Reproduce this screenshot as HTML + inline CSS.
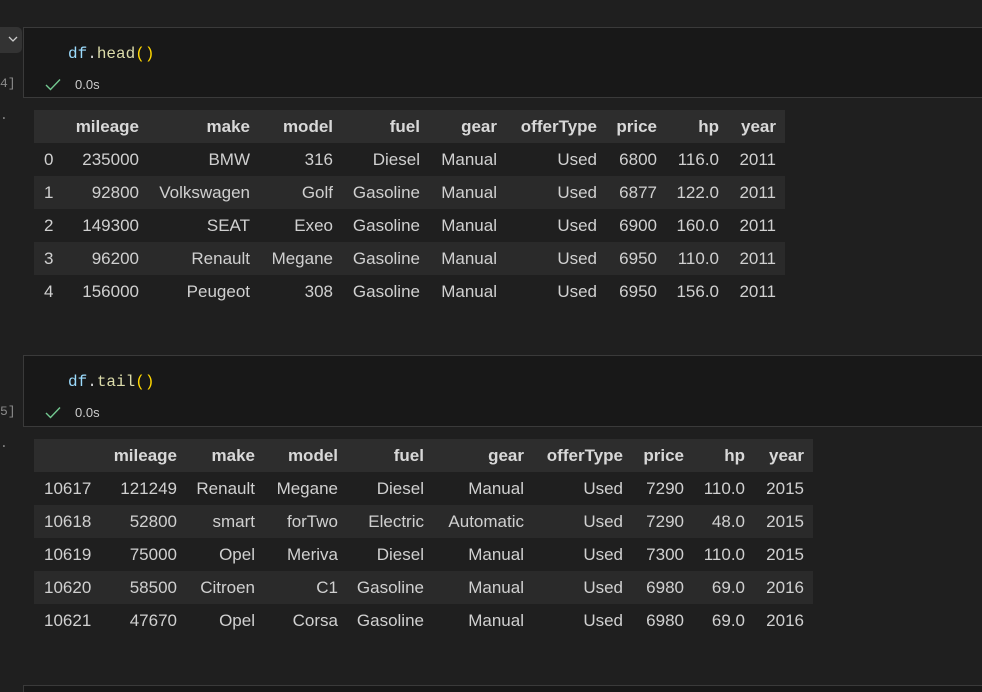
<!DOCTYPE html>
<html><head><meta charset="utf-8"><style>
html,body{margin:0;width:982px;height:692px;overflow:hidden;}
body{background:#1f1f1f;position:relative;font-family:"Liberation Sans",sans-serif;}
.cell{position:absolute;left:23px;width:965px;background:#181818;border:1px solid #3a3a3a;box-sizing:border-box;}
.code{position:absolute;left:44px;font-family:"Liberation Mono",monospace;font-size:16px;color:#9cdcfe;}
.code .f{color:#dcdcaa}.code .p{color:#ffd700}.code .w{color:#d4d4d4}
.chk{position:absolute;left:21px;}
.tm{position:absolute;left:51px;color:#cccccc;font-size:13px;}
.g{position:absolute;color:#8a8a8a;font-size:13px;font-family:"Liberation Mono",monospace;}
table{position:absolute;left:34px;border-collapse:collapse;table-layout:fixed;font-size:17px;color:#d0d0d0;}
td,th{height:33px;padding:0 9px 0 0;text-align:right;white-space:nowrap;box-sizing:border-box;}
th{font-weight:bold;color:#d8d8d8;}
tr.h{background:#2d2d2d}tr.a{background:#2a2a2a}
td.i{text-align:left;padding-left:10px}
</style></head><body>
<div style="position:absolute;left:0;top:27px;width:22px;height:26px;background:#333;border-radius:0 5px 5px 0"></div>
<svg style="position:absolute;left:7px;top:34px" width="12" height="10"><path d="M2 3l4 4 4-4" stroke="#ccc" fill="none" stroke-width="1.3"/></svg>
<div class="g" style="left:0;top:76px">4]</div>
<div class="g" style="left:0;top:108px">.</div>
<div class="g" style="left:0;top:404px">5]</div>
<div class="g" style="left:0;top:436px">.</div>

<div class="cell" style="top:27px;height:71px">
<div class="code" style="top:17px">df<span class="w">.</span><span class="f">head</span><span class="p">()</span></div>
<svg class="chk" style="top:50px" width="16" height="14"><path d="M1 7l4.5 4.5L15 1.5" stroke="#73c991" fill="none" stroke-width="1.4"/></svg>
<div class="tm" style="top:49px">0.0s</div>
</div>
<div class="cell" style="top:355px;height:72px">
<div class="code" style="top:17px">df<span class="w">.</span><span class="f">tail</span><span class="p">()</span></div>
<svg class="chk" style="top:50px" width="16" height="14"><path d="M1 7l4.5 4.5L15 1.5" stroke="#73c991" fill="none" stroke-width="1.4"/></svg>
<div class="tm" style="top:49px">0.0s</div>
</div>
<div class="cell" style="top:685px;height:7px;border-bottom:none"></div>

<table style="top:110px;width:751px">
<colgroup><col style="width:30px"><col style="width:84px"><col style="width:111px"><col style="width:83px"><col style="width:87px"><col style="width:77px"><col style="width:100px"><col style="width:60px"><col style="width:62px"><col style="width:57px"></colgroup>
<tr class="h"><th></th><th>mileage</th><th>make</th><th>model</th><th>fuel</th><th>gear</th><th>offerType</th><th>price</th><th>hp</th><th>year</th></tr>
<tr><td class="i">0</td><td>235000</td><td>BMW</td><td>316</td><td>Diesel</td><td>Manual</td><td>Used</td><td>6800</td><td>116.0</td><td>2011</td></tr>
<tr class="a"><td class="i">1</td><td>92800</td><td>Volkswagen</td><td>Golf</td><td>Gasoline</td><td>Manual</td><td>Used</td><td>6877</td><td>122.0</td><td>2011</td></tr>
<tr><td class="i">2</td><td>149300</td><td>SEAT</td><td>Exeo</td><td>Gasoline</td><td>Manual</td><td>Used</td><td>6900</td><td>160.0</td><td>2011</td></tr>
<tr class="a"><td class="i">3</td><td>96200</td><td>Renault</td><td>Megane</td><td>Gasoline</td><td>Manual</td><td>Used</td><td>6950</td><td>110.0</td><td>2011</td></tr>
<tr><td class="i">4</td><td>156000</td><td>Peugeot</td><td>308</td><td>Gasoline</td><td>Manual</td><td>Used</td><td>6950</td><td>156.0</td><td>2011</td></tr>
</table>

<table style="top:439px;width:779px">
<colgroup><col style="width:76px"><col style="width:76px"><col style="width:78px"><col style="width:83px"><col style="width:86px"><col style="width:100px"><col style="width:99px"><col style="width:61px"><col style="width:61px"><col style="width:59px"></colgroup>
<tr class="h"><th></th><th>mileage</th><th>make</th><th>model</th><th>fuel</th><th>gear</th><th>offerType</th><th>price</th><th>hp</th><th>year</th></tr>
<tr><td class="i">10617</td><td>121249</td><td>Renault</td><td>Megane</td><td>Diesel</td><td>Manual</td><td>Used</td><td>7290</td><td>110.0</td><td>2015</td></tr>
<tr class="a"><td class="i">10618</td><td>52800</td><td>smart</td><td>forTwo</td><td>Electric</td><td>Automatic</td><td>Used</td><td>7290</td><td>48.0</td><td>2015</td></tr>
<tr><td class="i">10619</td><td>75000</td><td>Opel</td><td>Meriva</td><td>Diesel</td><td>Manual</td><td>Used</td><td>7300</td><td>110.0</td><td>2015</td></tr>
<tr class="a"><td class="i">10620</td><td>58500</td><td>Citroen</td><td>C1</td><td>Gasoline</td><td>Manual</td><td>Used</td><td>6980</td><td>69.0</td><td>2016</td></tr>
<tr><td class="i">10621</td><td>47670</td><td>Opel</td><td>Corsa</td><td>Gasoline</td><td>Manual</td><td>Used</td><td>6980</td><td>69.0</td><td>2016</td></tr>
</table>
</body></html>
